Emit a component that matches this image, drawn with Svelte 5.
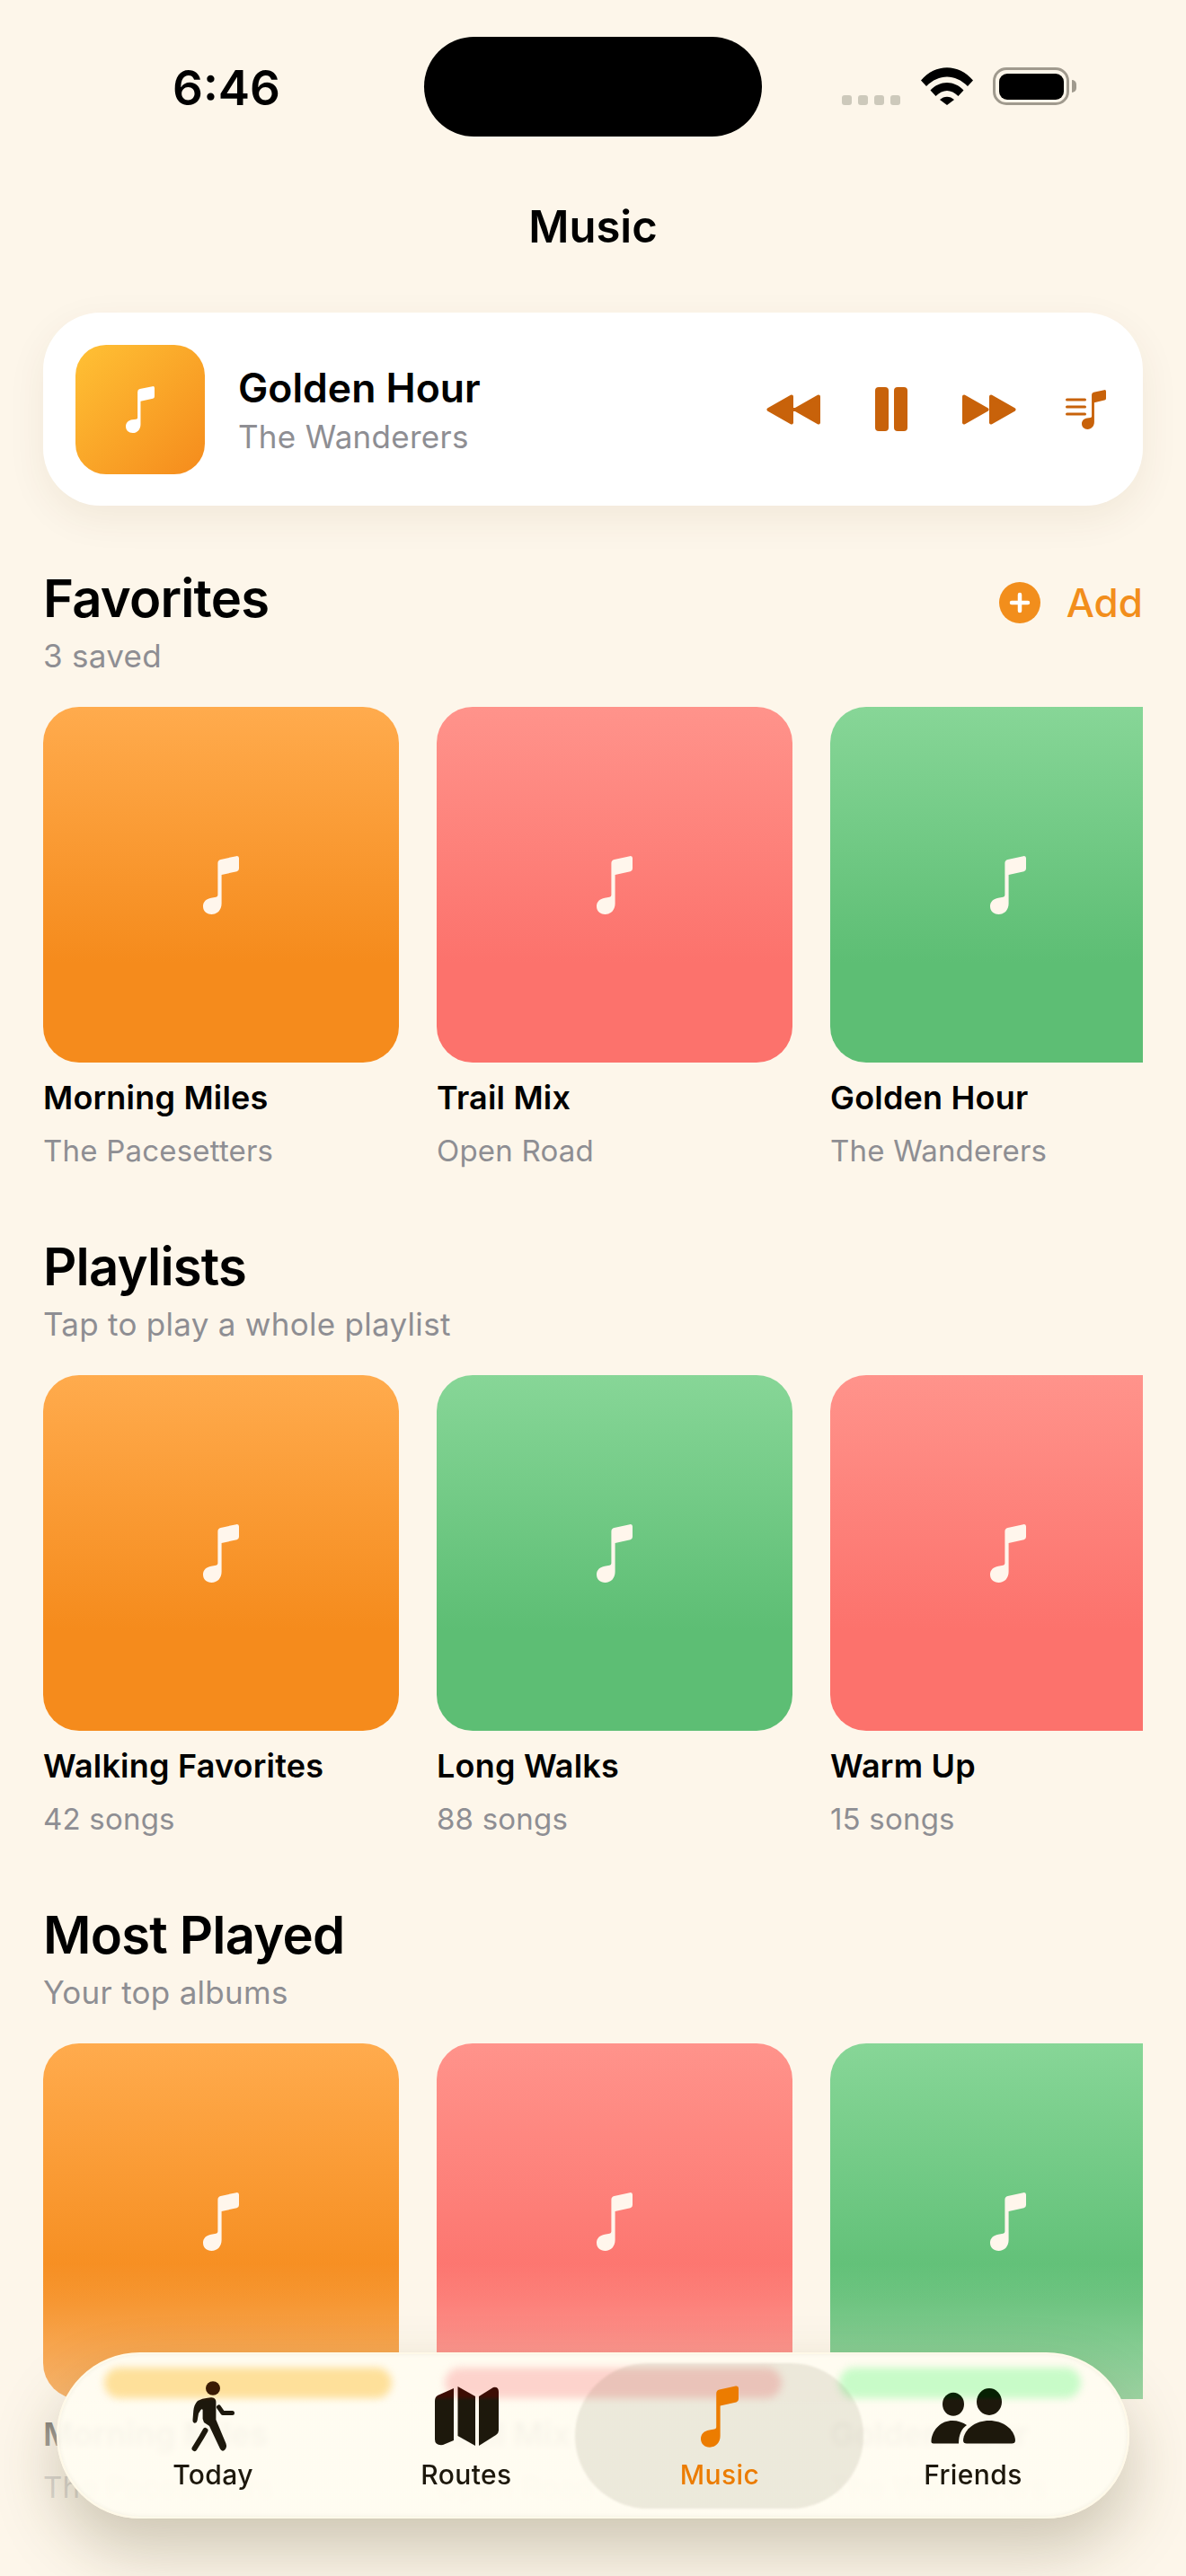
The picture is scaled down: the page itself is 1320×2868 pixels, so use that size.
<script>
  const NOTE = "M20.6 21 L37.6 17.2 Q40 16.6 40 14 V2.6 Q40 -.4 37 .2 L19.6 3.9 Q16.4 4.6 16.4 8 V43.6 Q16.4 45.4 14.4 45.8 L9 46.7 C3.6 47.6 0 51 0 56 C0 61.4 4 65 9.5 65 C16 65 20.6 60 20.6 53 Z";
  const sections = [
    { title: "Favorites", sub: "3 saved", add: true, cards: [
      { c: "orange", t: "Morning Miles", s: "The Pacesetters" },
      { c: "red", t: "Trail Mix", s: "Open Road" },
      { c: "green", t: "Golden Hour", s: "The Wanderers" } ] },
    { title: "Playlists", sub: "Tap to play a whole playlist", cards: [
      { c: "orange", t: "Walking Favorites", s: "42 songs" },
      { c: "green", t: "Long Walks", s: "88 songs" },
      { c: "red", t: "Warm Up", s: "15 songs" } ] },
    { title: "Most Played", sub: "Your top albums", cards: [
      { c: "orange", t: "Morning Miles", s: "The Pacesetters" },
      { c: "red", t: "Trail Mix", s: "Open Road" },
      { c: "green", t: "Golden Hour", s: "The Wanderers" } ] }
  ];
</script>

<div class="page">
  <header class="status">
    <div class="time">6:46</div>
    <div class="island"></div>
    <div class="sys">
      <div class="dots"><i></i><i></i><i></i><i></i></div>
      <svg class="wifi" viewBox="0 0 58 42" width="58" height="42">
        <path d="M0 14.5 C16 -4.5 42 -4.5 58 14.5 L52 21 C38 7 20 7 6 21 Z" fill="#000"/>
        <path d="M10.5 25.5 C21 14 37 14 47.5 25.5 L41.5 32 C33.5 24 24.5 24 16.5 32 Z" fill="#000"/>
        <path d="M21 36 C25.5 31.5 32.5 31.5 37 36 L29 42 Z" fill="#000"/>
      </svg>
      <div class="batt"><div class="cell"></div></div>
      <div class="nub"></div>
    </div>
  </header>

  <h1 class="nav">Music</h1>

  <section class="player">
    <div class="art">
      <svg viewBox="0 0 40 65" width="32" height="52"><path d={NOTE} fill="#fff"/></svg>
    </div>
    <div class="meta">
      <div class="ptitle">Golden Hour</div>
      <div class="psub">The Wanderers</div>
    </div>
    <div class="controls">
      <svg viewBox="0 0 60 34" width="60" height="34" fill="#c8620a" stroke="#c8620a" stroke-width="4" stroke-linejoin="round">
        <path d="M28 2.5 L2.5 17 L28 31.5 Z"/><path d="M58 2.5 L32.5 17 L58 31.5 Z" /><path d="M30 15v4" />
      </svg>
      <svg class="pause" viewBox="0 0 36 49" width="36" height="49" fill="#c8620a">
        <rect width="15" height="49" rx="4"/><rect x="21" width="15" height="49" rx="4"/>
      </svg>
      <svg viewBox="0 0 60 34" width="60" height="34" fill="#c8620a" stroke="#c8620a" stroke-width="4" stroke-linejoin="round">
        <path d="M2 2.5 L27.5 17 L2 31.5 Z"/><path d="M32 2.5 L57.5 17 L32 31.5 Z"/>
      </svg>
      <svg class="queue" viewBox="0 0 45 44" width="45" height="44">
        <path d="M1.5 11h20M1.5 19h20M1.5 27h20" stroke="#c8620a" stroke-width="3" stroke-linecap="round"/>
        <path transform="translate(18 0) scale(.675)" d={NOTE} fill="#c8620a"/>
      </svg>
    </div>
  </section>

  {#each sections as sec}
    <section class="sec">
      <div class="head">
        <div>
          <h2>{sec.title}</h2>
          <p class="sub">{sec.sub}</p>
        </div>
        {#if sec.add}
          <div class="add">
            <svg viewBox="0 0 46 46" width="46" height="46">
              <circle cx="23" cy="23" r="23" fill="#f28e1c"/>
              <path d="M23 14v18M14 23h18" stroke="#fff" stroke-width="4.5" stroke-linecap="round"/>
            </svg>
            <span>Add</span>
          </div>
        {/if}
      </div>
      <div class="row">
        {#each sec.cards as card}
          <article class="item">
            <div class="cover {card.c}">
              <svg viewBox="0 0 40 65" width="40" height="65"><path d={NOTE} fill="#fff6ec"/></svg>
            </div>
            <div class="t">{card.t}</div>
            <div class="s">{card.s}</div>
          </article>
        {/each}
      </div>
    </section>
  {/each}

  <div class="fade"></div>

  <nav class="tabs">
    <i class="glow g1"></i><i class="glow g2"></i><i class="glow g3"></i>
    <div class="sel"></div>
    <div class="tab">
      <div class="ico">
        <svg viewBox="0 0 49 79" width="49" height="79">
          <defs><linearGradient id="gw" gradientUnits="userSpaceOnUse" x1="0" y1="0" x2="0" y2="79"><stop offset=".22" stop-color="#3a1a04"/><stop offset=".28" stop-color="#1d180c"/></linearGradient></defs>
          <g fill="url(#gw)">
            <ellipse cx="24" cy="8" rx="8" ry="7.8"/>
            <path d="M18 18.7 C22 17.6 27.4 18 27.4 23 V43 L38.5 69.5 Q40 74 37 76.8 Q34 79 32 75.5 L20 50 L14 46 L12.6 42 V32 Q12 30.5 10.5 32 L8 36 L6.6 44 Q6 47 3.5 46.7 Q1.3 46.3 1.5 43 L2.3 33 Q3 26 7 22 Q12 19 18 18.7Z"/>
          </g>
          <path d="M15.5 55 L11.5 62 L3.5 75" fill="none" stroke="#1d180c" stroke-width="6" stroke-linecap="round"/>
          <path d="M30.5 29 L35 35.5 H45.5" fill="none" stroke="#1d180c" stroke-width="5" stroke-linecap="round" stroke-linejoin="round"/>
        </svg>
      </div>
      <span>Today</span>
    </div>
    <div class="tab">
      <div class="ico">
        <svg viewBox="0 0 71 66" width="71" height="66">
          <defs><linearGradient id="gm" gradientUnits="userSpaceOnUse" x1="0" y1="0" x2="0" y2="66"><stop offset=".16" stop-color="#3c0d04"/><stop offset=".24" stop-color="#1d180c"/></linearGradient></defs>
          <g fill="url(#gm)">
            <path d="M21 2 V60 L9 65 Q0 66 0 59 V16 Q0 12 3 10 Z"/>
            <path d="M25.5 0 L45 11 V66 L25.5 55 Z"/>
            <path d="M49 11 L65 1 Q71 0 71 6 V49 Q71 52 68 54 L49 66 Z"/>
          </g>
        </svg>
      </div>
      <span>Routes</span>
    </div>
    <div class="tab active">
      <div class="ico">
        <svg viewBox="0 0 40 65" width="42" height="69"><path d={NOTE} fill="#ec7c00"/></svg>
      </div>
      <span>Music</span>
    </div>
    <div class="tab">
      <div class="ico">
        <svg viewBox="0 0 94 62" width="94" height="62">
          <defs><linearGradient id="gf" gradientUnits="userSpaceOnUse" x1="0" y1="0" x2="0" y2="62"><stop offset=".14" stop-color="#062103"/><stop offset=".22" stop-color="#1d180c"/></linearGradient></defs>
          <g fill="url(#gf)">
            <ellipse cx="25" cy="17.7" rx="12" ry="13"/>
            <ellipse cx="65" cy="15" rx="14" ry="15"/>
            <path d="M40 61.5 Q36 61.5 36 58 C37 45 50 36 65 36 C80 36 93 45 94 58 Q94 61.5 90 61.5Z"/>
            <path d="M3 61.5 Q0 61.5 .5 58 C2 45 12 36 24 36 C30 36 36 38 40 41 C34 45 31 52 31 61.5Z"/>
          </g>
        </svg>
      </div>
      <span>Friends</span>
    </div>
  </nav>
</div>

<style>
  :global(body) { margin: 0; background: #fdf6ea; }
  .page {
    position: relative;
    height: 2868px;
    overflow: hidden;
    background: #fdf6ea;
    font-family: Inter, "Liberation Sans", sans-serif;
    color: #000;
  }
  .status {
    display: grid;
    grid-template-columns: 472px 376px 1fr;
    padding-top: 41px;
    height: 152px;
    box-sizing: border-box;
  }
  .time {
    padding-left: 192px;
    font-size: 53px;
    font-weight: 600;
    line-height: 56px;
    margin-top: 29px;
  }
  .island { height: 111px; background: #000; border-radius: 56px; }
  .sys { display: flex; align-items: flex-end; height: 76px; padding-left: 89px; }
  .dots { display: flex; gap: 7px; margin-right: 23px; }
  .dots i { width: 11px; height: 11px; border-radius: 3px; background: #cdc9bb; }
  .wifi { margin-right: 22px; }
  .batt {
    box-sizing: border-box;
    width: 85px;
    height: 42px;
    border: 3.5px solid #a09a8e;
    border-radius: 15px;
    padding: 3.5px;
  }
  .cell { height: 100%; background: #000; border-radius: 9px; }
  .nub { width: 5px; height: 14px; background: #a09a8e; border-radius: 0 5px 5px 0; margin: 0 0 14px 3px; }
  .nav {
    margin: 71px 0 0;
    text-align: center;
    font-size: 49px;
    line-height: 60px;
    font-weight: 600;
  }
  .player {
    display: flex;
    align-items: center;
    box-sizing: border-box;
    width: 1224px;
    height: 215px;
    margin: 65px 0 68px 48px;
    padding: 0 36px;
    background: #fff;
    border-radius: 64px;
    box-shadow: 0 14px 44px rgba(80, 60, 20, .07);
  }
  .art {
    width: 144px;
    height: 144px;
    border-radius: 34px;
    background: linear-gradient(135deg, #ffc135, #f58b1c);
    display: flex;
    align-items: center;
    justify-content: center;
  }
  .meta { margin: 7px 0 0 37px; flex: 1; }
  .ptitle { font-size: 44.5px; line-height: 54px; font-weight: 600; }
  .psub { font-size: 35px; line-height: 54px; color: #8e8e93; letter-spacing: .28px; }
  .controls { display: flex; align-items: center; gap: 60px; margin-right: 5px; }
  .controls .pause { margin: 0 1px; }
  .controls .queue { margin-left: -5px; }
  .sec { margin: 0 0 72px 48px; }
  .head { display: flex; justify-content: space-between; width: 1224px; }
  h2 { margin: 0; font-size: 58px; line-height: 70px; font-weight: 600; letter-spacing: -.8px; }
  .sub { margin: 7px 0 0; font-size: 35px; line-height: 44px; color: #8e8e93; letter-spacing: .28px; }
  .add { display: flex; align-items: center; gap: 29px; height: 80px; color: #f28e1c; font-size: 44px; font-weight: 500; }
  .add svg { margin-left: 2px; }
  .row { display: flex; gap: 42px; width: 1224px; overflow: hidden; margin-top: 35px; }
  .item { flex: 0 0 396px; }
  .cover {
    height: 396px;
    border-radius: 40px;
    display: flex;
    align-items: center;
    justify-content: center;
  }
  .orange { background: linear-gradient(180deg, #ffab4d, #f58b1c 72%); }
  .red { background: linear-gradient(180deg, #ff938b, #fc726c 72%); }
  .green { background: linear-gradient(180deg, #87d697, #5dbe74 72%); }
  .t { margin-top: 17px; font-size: 36px; line-height: 44px; font-weight: 560; letter-spacing: .2px; }
  .s { margin-top: 15px; font-size: 33px; line-height: 44px; color: #8e8e93; letter-spacing: .2px; }
  .fade {
    position: absolute;
    left: 0;
    right: 0;
    top: 2520px;
    bottom: 0;
    background: linear-gradient(180deg, rgba(253, 246, 234, 0), rgba(253, 246, 234, .1) 11.5%, rgba(253, 246, 234, .4) 43%, rgba(253, 246, 234, .62) 55%, rgba(253, 246, 234, .85));
  }
  .tabs {
    position: absolute;
    left: 63px;
    top: 2619px;
    box-sizing: border-box;
    width: 1194px;
    height: 185px;
    padding: 29px 30px 0 31px;
    display: grid;
    grid-template-columns: repeat(4, 282px);
    border-radius: 93px;
    border: 2px solid rgba(255, 250, 232, .9);
    background: linear-gradient(180deg, #fffcf1 0 52px, rgba(255, 252, 241, .93) 56px);
    backdrop-filter: blur(3px);
    box-shadow: 0 34px 70px rgba(70, 60, 25, .26), inset 0 0 4px rgba(120, 110, 80, .1);
  }
  .glow { position: absolute; top: 15px; height: 34px; border-radius: 17px; filter: blur(4px); }
  .g1 { left: 51px; width: 320px; background: #fee09a; }
  .g2 { left: 430px; width: 375px; background: #fdd3cc; }
  .g3 { left: 869px; width: 269px; background: #c8fbc8; }
  .sel {
    position: absolute;
    left: 575px;
    top: 10px;
    width: 321px;
    height: 162px;
    border-radius: 81px;
    background: rgba(70, 60, 15, .1);
    filter: blur(1px);
  }
  .tab { position: relative; display: flex; flex-direction: column; align-items: center; color: #1d180c; font-size: 30px; font-weight: 500; letter-spacing: .4px; }
  .ico { height: 80px; display: flex; align-items: center; justify-content: center; }
  .tab span { margin-top: 7px; line-height: 36px; }
  .active { color: #ec7c00; }
</style>
